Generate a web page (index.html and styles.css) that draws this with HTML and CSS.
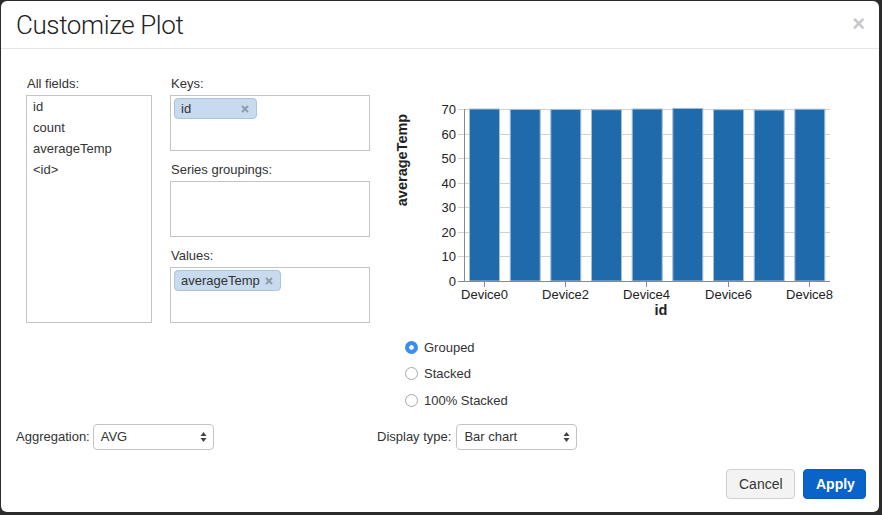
FILE: index.html
```html
<!DOCTYPE html>
<html>
<head>
<meta charset="utf-8">
<link rel="stylesheet" href="styles.css">
</head>
<body>
<div class="modal">
  <div class="modal-header">
    <h1 class="title">Customize Plot</h1>
    <span class="close">×</span>
  </div>
  <div class="modal-body">
    <div class="top-row">
      <div class="col-fields">
        <div class="label">All fields:</div>
        <ul class="field-list">
          <li>id</li>
          <li>count</li>
          <li>averageTemp</li>
          <li>&lt;id&gt;</li>
        </ul>
      </div>
      <div class="col-drop">
        <div class="label">Keys:</div>
        <div class="drop-box">
          <span class="tag"><span>id</span><svg class="tag-x" width="8" height="8" viewBox="0 0 8 8"><path d="M1 1L7 7M7 1L1 7" stroke="#8e9cae" stroke-width="2"/></svg></span>
        </div>
        <div class="label gap">Series groupings:</div>
        <div class="drop-box"></div>
        <div class="label gap">Values:</div>
        <div class="drop-box">
          <span class="tag"><span>averageTemp</span><svg class="tag-x" width="8" height="8" viewBox="0 0 8 8"><path d="M1 1L7 7M7 1L1 7" stroke="#8e9cae" stroke-width="2"/></svg></span>
        </div>
      </div>
      <div class="col-chart">
        <svg class="chart" width="460" height="240" viewBox="0 0 460 240">
          <g class="grid" stroke="#d2d2d2" stroke-width="1">
            <line x1="78" y1="19.5" x2="450" y2="19.5"/>
            <line x1="78" y1="44.5" x2="450" y2="44.5"/>
            <line x1="78" y1="68.5" x2="450" y2="68.5"/>
            <line x1="78" y1="93.5" x2="450" y2="93.5"/>
            <line x1="78" y1="117.5" x2="450" y2="117.5"/>
            <line x1="78" y1="142.5" x2="450" y2="142.5"/>
            <line x1="78" y1="166.5" x2="450" y2="166.5"/>
          </g>
          <g fill="#1f6aab" stroke="#a3bfda" stroke-width="1">
            <rect x="89.5" y="19" width="30" height="172"/>
            <rect x="130.2" y="19.4" width="30" height="171.6"/>
            <rect x="170.8" y="19.4" width="30" height="171.6"/>
            <rect x="211.5" y="19.7" width="30" height="171.3"/>
            <rect x="252.2" y="19" width="30" height="172"/>
            <rect x="292.8" y="18.4" width="30" height="172.6"/>
            <rect x="333.5" y="19.7" width="30" height="171.3"/>
            <rect x="374.2" y="20" width="30" height="171"/>
            <rect x="414.8" y="19.2" width="30" height="171.8"/>
          </g>
          <g stroke="#8a8a8a" stroke-width="1">
            <line x1="84.5" y1="19" x2="84.5" y2="191"/>
            <line x1="78" y1="191.5" x2="450" y2="191.5"/>
            <line x1="104.5" y1="191" x2="104.5" y2="197"/>
            <line x1="185.5" y1="191" x2="185.5" y2="197"/>
            <line x1="266.5" y1="191" x2="266.5" y2="197"/>
            <line x1="348.5" y1="191" x2="348.5" y2="197"/>
            <line x1="429.5" y1="191" x2="429.5" y2="197"/>
          </g>
          <g class="ticks" text-anchor="end">
            <text x="76" y="24">70</text>
            <text x="76" y="49">60</text>
            <text x="76" y="73">50</text>
            <text x="76" y="98">40</text>
            <text x="76" y="122">30</text>
            <text x="76" y="147">20</text>
            <text x="76" y="171">10</text>
            <text x="76" y="196">0</text>
          </g>
          <g class="ticks" text-anchor="middle">
            <text x="104.5" y="209">Device0</text>
            <text x="185.5" y="209">Device2</text>
            <text x="266.5" y="209">Device4</text>
            <text x="348.5" y="209">Device6</text>
            <text x="429.5" y="209">Device8</text>
          </g>
          <text class="axis-title" x="281" y="225" text-anchor="middle">id</text>
          <text class="axis-title" transform="translate(27 70) rotate(-90)" text-anchor="middle">averageTemp</text>
        </svg>
        <div class="radios">
          <label class="radio"><span class="dot checked"></span>Grouped</label>
          <label class="radio"><span class="dot"></span>Stacked</label>
          <label class="radio"><span class="dot"></span>100% Stacked</label>
        </div>
      </div>
    </div>
    <div class="bottom-row">
      <div class="form-inline tight">
        <span class="inline-label">Aggregation:</span>
        <div class="select"><span>AVG</span><svg width="7" height="12" viewBox="0 0 7 12"><path d="M3.5 1L6.5 5H0.5Z M3.5 11L6.5 7H0.5Z" fill="#444"/></svg></div>
      </div>
      <div class="form-inline">
        <span class="inline-label">Display type:</span>
        <div class="select"><span>Bar chart</span><svg width="7" height="12" viewBox="0 0 7 12"><path d="M3.5 1L6.5 5H0.5Z M3.5 11L6.5 7H0.5Z" fill="#444"/></svg></div>
      </div>
    </div>
  </div>
  <div class="modal-footer">
    <button class="btn btn-default">Cancel</button>
    <button class="btn btn-primary">Apply</button>
  </div>
</div>
</body>
</html>
```

FILE: styles.css
```css
html, body {
  margin: 0;
  padding: 0;
  background: #2b2b2b;
}
body {
  font-family: "Liberation Sans", Arial, sans-serif;
  font-size: 13px;
  color: #333;
  width: 882px;
  height: 515px;
  overflow: hidden;
}
.modal {
  margin: 1px 0 0 1px;
  width: 878px;
  height: 511px;
  background: #fff;
  border-radius: 6px;
  display: flex;
  flex-direction: column;
  box-sizing: border-box;
}
.modal-header {
  height: 47px;
  border-bottom: 1px solid #e5e5e5;
  display: flex;
  align-items: center;
  justify-content: space-between;
  padding: 0 14px 0 15px;
}
.title {
  margin: 0;
  font-family: Roboto, "Liberation Sans", sans-serif;
  font-weight: 300;
  font-size: 26px;
  color: #222;
  letter-spacing: -0.4px;
}
.close {
  font-size: 22px;
  font-weight: bold;
  color: #c8c8c8;
  line-height: 1;
  margin-top: -2px;
}
.modal-body {
  padding: 26px 13px 0 15px;
}
.top-row {
  display: flex;
  padding-left: 10px;
}
.label {
  line-height: 18px;
  height: 18px;
  margin-bottom: 2px;
  padding-left: 1px;
}
.label.gap {
  margin-top: 10px;
}
.col-fields {
  width: 126px;
  margin-right: 18px;
}
.field-list {
  list-style: none;
  margin: 0;
  padding: 0 6px;
  height: 228px;
  border: 1px solid #c4c4c4;
  box-sizing: border-box;
}
.field-list li {
  line-height: 21px;
}
.col-drop {
  width: 200px;
  margin-right: 10px;
}
.drop-box {
  height: 56px;
  border: 1px solid #c4c4c4;
  box-sizing: border-box;
  padding: 2px 3px;
}
.tag {
  display: inline-flex;
  align-items: center;
  justify-content: space-between;
  min-width: 83px;
  height: 21px;
  box-sizing: border-box;
  background: #c7daee;
  border: 1px solid #a9c3e0;
  border-radius: 4px;
  padding: 0 7px 0 6px;
  gap: 5px;
  color: #333;
}
.tag-x {
  display: block;
}
.col-chart {
  padding-top: 15px;
}
.chart {
  display: block;
}
.ticks text {
  font-family: "Liberation Sans", Arial, sans-serif;
  font-size: 13px;
  fill: #222;
}
.axis-title {
  font-family: "Liberation Sans", Arial, sans-serif;
  font-size: 14.5px;
  font-weight: bold;
  fill: #222;
}
.radios {
  margin-top: 4px;
  padding-left: 25px;
  display: flex;
  flex-direction: column;
}
.radio {
  display: flex;
  align-items: center;
  height: 26.5px;
  gap: 6px;
}
.dot {
  width: 13px;
  height: 13px;
  box-sizing: border-box;
  border-radius: 50%;
  border: 1px solid #a8a8a8;
  background: #fff;
}
.dot.checked {
  border: none;
  background: radial-gradient(circle, #fff 0 2px, #3a8ef2 2.5px);
}
.bottom-row {
  display: grid;
  grid-template-columns: 361px auto;
  margin-top: 10px;
}
.form-inline {
  display: flex;
  align-items: center;
  gap: 5px;
}
.form-inline.tight {
  gap: 3px;
}
.select {
  width: 121px;
  height: 26px;
  box-sizing: border-box;
  border: 1px solid #c4c4c4;
  border-radius: 4px;
  display: flex;
  align-items: center;
  justify-content: space-between;
  padding: 0 6px 0 7px;
  color: #333;
}
.select svg {
  display: block;
}
.modal-footer {
  margin-top: auto;
  display: flex;
  justify-content: flex-end;
  gap: 8px;
  padding: 0 13px 13px 0;
}
.btn {
  font-family: "Liberation Sans", Arial, sans-serif;
  font-size: 14px;
  height: 30px;
  border-radius: 4px;
  padding: 0 12px;
  box-sizing: border-box;
}
.btn-default {
  width: 69px;
  background: #f3f3f3;
  border: 1px solid #cfcfcf;
  color: #333;
}
.btn-primary {
  width: 63px;
  background: #0a63c8;
  border: 1px solid #0a5cbd;
  color: #fff;
  font-weight: bold;
}
```
